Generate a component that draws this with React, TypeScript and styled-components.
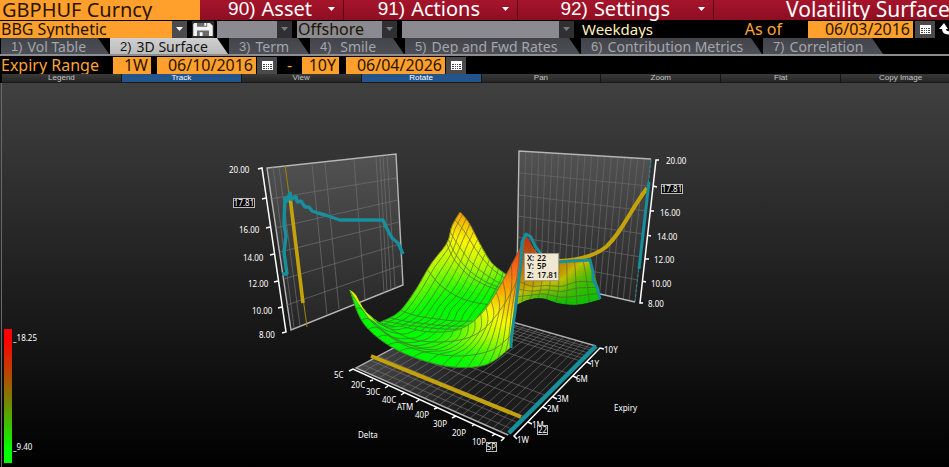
import React from "react";
import styled, { createGlobalStyle } from "styled-components";

const Global = createGlobalStyle`
  * { box-sizing: border-box; }
  body { margin: 0; background: #000; }
  button, input, select { font: inherit; margin: 0; border: 0; border-radius: 0; }
`;

const Page = styled.div`
  min-height: 100vh;
  display: flex;
  flex-direction: column;
  overflow: hidden;
  background: #000;
  font-family: "Noto Sans", "Open Sans", sans-serif;
  font-size: 16px;
  color: #fba535;
`;

const Header = styled.header`
  display: grid;
  grid-template-columns: 200fr 144fr 174fr 196fr 235fr;
  height: 20px;
  font-size: 20px;
  line-height: 18px;
  white-space: nowrap;
`;

const Security = styled.div`
  background: #ffa02c;
  color: #2a1400;
  padding-left: 2px;
  line-height: 19px;
`;

const MenuButton = styled.button`
  display: flex;
  align-items: center;
  justify-content: flex-end;
  gap: 6px;
  min-width: 0;
  padding: 0 8px 2px 0;
  line-height: 18px;
  color: #fff;
  background: linear-gradient(#a5152c, #8f0e22);
  border-right: 1px solid #5c0714;
`;

const MenuText = styled.span<{ $gap: number }>`
  margin-right: ${(p) => p.$gap}px;
`;

const Num = styled.span<{ $size: number }>`
  font-family: "Liberation Sans Narrow", "Liberation Sans", sans-serif;
  font-size: ${(p) => p.$size}px;
`;

const Title = styled.h1`
  margin: 0;
  min-width: 0;
  overflow: hidden;
  padding-left: 72px;
  font-size: 21px;
  line-height: 19px;
  font-weight: 400;
  color: #fff;
  background: linear-gradient(#a5152c, #8f0e22);
`;

const Bar = styled.div`
  display: flex;
  align-items: center;
  height: 18px;
  line-height: 17px;
  white-space: nowrap;
`;

const Picker = styled.label<{ $w: number; $after: number }>`
  display: flex;
  flex: 0 1 ${(p) => p.$w}px;
  height: 17px;
  min-width: 0;
  margin-right: ${(p) => p.$after}px;
`;

const Select = styled.select<{ $bg: string }>`
  appearance: none;
  flex: 1;
  min-width: 0;
  height: 17px;
  line-height: 17px;
  padding: 0 0 0 1px;
  color: #201400;
  background: ${(p) => p.$bg};
`;

const Arrow = styled.span<{ $dim?: boolean }>`
  width: 15px;
  display: grid;
  place-items: center;
  color: ${(p) => (p.$dim ? "#7b7b7e" : "#fff")};
  background: ${(p) => (p.$dim ? "#303033" : "#4b4b4e")};
`;

const Icon = styled.button`
  display: grid;
  place-items: center;
  flex: none;
  width: 20px;
  height: 17px;
  padding: 0;
  color: #fff;
  background: #4a4a4c;
`;

const BareIcon = styled(Icon)`
  width: 22px;
  margin-right: 3px;
  background: #2c2c2c;
`;

const Refresh = styled(Icon)`
  width: 15px;
  margin: 0 -5px 0 4px;
  background: transparent;
`;

const Calendar = styled.span`
  flex: 1;
  font-size: 15px;
  color: #fff0b8;
`;

const AsOf = styled.label`
  display: flex;
  gap: 26px;
  margin-right: 2px;
`;

const Field = styled.input<{ $w: number }>`
  width: ${(p) => p.$w}px;
  height: 17px;
  padding: 0 3px 0 0;
  line-height: 17px;
  text-align: right;
  color: #2a1400;
  background: #ffa02c;
`;

const Tabs = styled.nav`
  display: flex;
  gap: 1px;
  height: 18px;
  padding-left: 1px;
  border-bottom: 2px solid #8d8d90;
`;

const Tab = styled.button<{ $w: number; $on?: boolean }>`
  display: flex;
  align-items: center;
  gap: 5px;
  flex: 0 1 ${(p) => p.$w}px;
  min-width: 0;
  height: 16px;
  padding: 1px 0 0 10px;
  font-size: 14px;
  line-height: 16px;
  white-space: nowrap;
  color: ${(p) => (p.$on ? "#141414" : "#a3a6ac")};
  background: ${(p) => (p.$on ? "linear-gradient(#d0d0d0, #bababa)" : "linear-gradient(#43444a, #4e4f56)")};
  clip-path: polygon(0 0, calc(100% - 11px) 0, 100% 100%, 0 100%);
`;

const Range = styled(Bar)`
  padding-left: 1px;
`;

const RangeLabel = styled.label`
  width: 112px;
`;

const Gap = styled.span<{ $w: number }>`
  width: ${(p) => p.$w}px;
  text-align: center;
`;

const Tools = styled.div`
  display: grid;
  grid-template-columns: repeat(8, 1fr);
  height: 9px;
  padding-left: 2px;
  margin-right: -12px;
`;

const Tool = styled.button<{ $on?: boolean }>`
  min-width: 0;
  padding: 0;
  height: 9px;
  font-family: "Liberation Sans", Arial, sans-serif;
  font-size: 8px;
  line-height: 8px;
  color: ${(p) => (p.$on ? "#fff" : "#c4c4c4")};
  background: ${(p) => (p.$on ? "#24548c" : "linear-gradient(#3a3a3a, #262626)")};
  border-right: 1px solid #161616;
  border-bottom: 1px solid #1a1a1a;
`;

const Chart = styled.main`
  flex: 1;
  background: linear-gradient(#404040, #1d1d1d 55%, #000);
`;

const Plot = styled.svg`
  display: block;
  width: 100%;
  height: auto;
  font-family: "Noto Sans", "Open Sans", sans-serif;
  font-size: 8px;
  fill: #fff;
`;

const tabs: [string, string, number][] = [
  ["1)", "Vol Table", 108],
  ["2)", "3D Surface", 118],
  ["3)", "Term", 80],
  ["4)", "\u00a0Smile", 94],
  ["5)", "Dep and Fwd Rates", 175],
  ["6)", "Contribution Metrics", 181],
  ["7)", "Correlation", 120],
];

const tools = ["Legend", "Track", "View", "Rotate", "Pan", "Zoom", "Flat", "Copy Image"];

const Caret = () => (
  <svg width="7" height="4" viewBox="0 0 7 4" aria-hidden="true">
    <path d="M0 0h7L3.5 4z" fill="currentColor" />
  </svg>
);

const CalendarIcon = () => (
  <svg width="11" height="9" viewBox="0 0 11 9" aria-hidden="true">
    <path d="M0 0h11v9H0z" fill="#fff" />
    <path d="M1 3h2v1H1zM4 3h1v1H4zM6 3h1v1H6zM8 3h2v1H8zM1 5h2v1H1zM4 5h1v1H4zM6 5h1v1H6zM8 5h2v1H8zM1 7h2v1H1zM4 7h1v1H4zM6 7h1v1H6zM8 7h2v1H8z" fill="#444" />
  </svg>
);

/* ---------- surface geometry ---------- */

type P = [number, number, number];

const spline = (a: number, b: number, c: number, d: number, t: number) =>
  0.5 * (2 * b + (c - a) * t + (2 * a - 5 * b + 4 * c - d) * t * t + (3 * b - a - 3 * c + d) * t * t * t);

function along(points: P[], u: number): P {
  const n = points.length - 1;
  const s = Math.min(u * n, n - 1e-6);
  const i = Math.floor(s);
  const t = s - i;
  const at = (k: number) => points[Math.max(0, Math.min(n, k))];
  return [0, 1, 2].map((k) => spline(at(i - 1)[k], at(i)[k], at(i + 1)[k], at(i + 2)[k], t)) as P;
}

const surfaceAt = (rows: P[][], u: number, v: number) => along(rows.map((r) => along(r, u)), v);

function heat(h: number) {
  const t = Math.max(0, Math.min(1, h));
  const r = t < 0.5 ? Math.round(t * 2 * 255) : 255;
  const g = t < 0.5 ? 255 : Math.round(255 - (t - 0.5) * 2 * 215);
  return `rgb(${r},${g},${t > 0.75 ? 20 : 0})`;
}

const toPath = (pts: P[]) => "M" + pts.map((p) => `${p[0].toFixed(1)} ${p[1].toFixed(1)}`).join("L");

interface PatchProps {
  rows: P[][];
  us: number[];
  vs: number[];
  shade?: number;
}

function Patch({ rows, us, vs, shade = 0 }: PatchProps) {
  const nu = 44;
  const nv = 24;
  const cells = [];
  for (let j = 0; j < nv; j++) {
    for (let i = 0; i < nu; i++) {
      const q = [
        surfaceAt(rows, i / nu, j / nv),
        surfaceAt(rows, (i + 1) / nu, j / nv),
        surfaceAt(rows, (i + 1) / nu, (j + 1) / nv),
        surfaceAt(rows, i / nu, (j + 1) / nv),
      ];
      const c = heat((q[0][2] + q[2][2]) / 2);
      cells.push(<path key={`${i}-${j}`} d={toPath(q) + "Z"} fill={c} stroke={c} strokeWidth="0.6" />);
    }
  }
  const steps = Array.from({ length: 41 }, (_, i) => i / 40);
  const outline = toPath([
    ...steps.map((s) => surfaceAt(rows, s, 0)),
    ...steps.map((s) => surfaceAt(rows, 1, s)),
    ...steps.map((s) => surfaceAt(rows, 1 - s, 1)),
    ...steps.map((s) => surfaceAt(rows, 0, 1 - s)),
  ]);
  return (
    <g>
      {cells}
      {shade > 0 && <path d={outline + "Z"} fill="#403000" opacity={shade} />}
      <g fill="none" stroke="#55603a" strokeWidth="0.9" opacity="0.75">
        {us.map((u) => <path key={"u" + u} d={toPath(steps.map((s) => surfaceAt(rows, u, s)))} />)}
        {vs.map((v) => <path key={"v" + v} d={toPath(steps.map((s) => surfaceAt(rows, s, v)))} />)}
      </g>
    </g>
  );
}

const even = (n: number) => Array.from({ length: n + 1 }, (_, i) => i / n);

const basin: P[][] = [
  [[460, 212, 0.72], [469, 223, 0.66], [480, 244, 0.47], [491, 262, 0.36], [504, 273, 0.22], [518, 282, 0.12]],
  [[452, 226, 0.6], [462, 239, 0.52], [474, 256, 0.44], [488, 270, 0.32], [502, 280, 0.15], [516, 288, 0.05]],
  [[447, 243, 0.47], [454, 258, 0.4], [467, 273, 0.26], [482, 283, 0.15], [497, 289, 0.05], [513, 293, 0]],
  [[431, 264, 0.4], [442, 279, 0.2], [457, 291, 0.06], [472, 298, 0.02], [490, 302, 0], [508, 304, 0]],
  [[415, 291, 0.24], [428, 301, 0.05], [443, 307, 0], [461, 311, 0], [482, 313, 0], [503, 313, 0.05]],
  [[399, 312, 0.05], [415, 317, 0], [435, 320, 0], [455, 322, 0], [475, 322, 0.05], [499, 321, 0.2]],
  [[381, 322, 0], [400, 326, 0], [420, 329, 0], [440, 331, 0], [465, 331, 0.1], [494, 328, 0.3]],
  [[378, 324, 0], [394, 336, 0], [415, 343, 0], [438, 347, 0], [462, 345, 0.1], [490, 338, 0.3]],
];

const slope: P[][] = [
  [[400, 326, 0], [430, 332, 0], [460, 329, 0.15], [482, 313, 0.42], [500, 286, 0.74], [526, 237, 1]],
  [[385, 326, 0], [418, 339, 0], [455, 339, 0.15], [482, 328, 0.38], [503, 302, 0.62], [521, 268, 0.88]],
  [[366, 312, 0], [395, 339, 0], [435, 349, 0.04], [470, 346, 0.2], [498, 329, 0.44], [515, 306, 0.62]],
  [[352, 293, 0.05], [373, 323, 0], [409, 347, 0], [455, 356, 0.02], [492, 350, 0.2], [513, 333, 0.44]],
  [[350, 290, 0.1], [364, 324, 0], [397, 350, 0], [445, 366, 0], [485, 365, 0.06], [511, 347, 0.3]],
];

const rim: P[][] = [
  [[526, 236, 1], [536, 252, 0.85], [548, 260, 0.7], [562, 262, 0.68], [576, 260, 0.66], [590, 260, 0.52]],
  [[521, 262, 0.8], [533, 272, 0.74], [547, 274, 0.66], [562, 275, 0.58], [577, 270, 0.42], [593, 271, 0.2]],
  [[517, 285, 0.62], [531, 289, 0.52], [546, 288, 0.4], [562, 289, 0.28], [578, 285, 0.15], [597, 285, 0.05]],
  [[515, 305, 0.4], [529, 299, 0.2], [543, 298, 0.1], [560, 303, 0], [579, 304, 0], [600, 299, 0]],
];

const floor = { a: [356, 368], b: [508, 435], c: [596, 346], d: [467, 309] };
const mix = (p: number[], q: number[], t: number) => [p[0] + (q[0] - p[0]) * t, p[1] + (q[1] - p[1]) * t];
const seg = (p: number[], q: number[]) => `M${p[0]} ${p[1]}L${q[0]} ${q[1]}`;

const floorGrid = [
  ...[0.06, 0.13, 0.2, 0.34, 0.44, 0.69, 0.83, 0.86, 0.89, 0.92, 0.95, 0.97].map((t) =>
    seg(mix(floor.a, floor.d, t), mix(floor.b, floor.c, t))),
  ...even(20).map((t) => seg(mix(floor.a, floor.b, t), mix(floor.d, floor.c, t))),
].join("");

const leftGrid = [
  ...[[273, 167, 294, 328], [279, 167, 300, 326], [312, 164, 327, 315], [325, 163, 339, 309], [354, 160, 365, 299],
    [376, 157, 384, 293], [380, 156, 387, 291], [383, 156, 391, 290], [387, 155, 395, 288],
    [270, 199, 396, 178], [275, 228, 398, 200], [280, 252, 399, 222], [284, 279, 400, 244], [287, 305, 402, 265]],
].map(([a, b, c, d]) => seg([a, b], [c, d])).join("");

const rightGrid = [
  ...even(20).map((t) => seg(mix([519, 151], [651, 159], t), mix([517, 275], [635, 302], t))),
  ...[[519, 173, 649, 186], [518, 195, 647, 211], [518, 216, 644, 234], [517, 237, 641, 257], [517, 257, 638, 280]]
    .map(([a, b, c, d]) => seg([a, b], [c, d])),
].join("");

const labels: [string, number, number][] = [
  ["20.00", 229, 173], ["16.00", 239, 233], ["14.00", 243, 261], ["12.00", 248, 287], ["10.00", 252, 314], ["8.00", 259, 338],
  ["20.00", 666, 164], ["16.00", 660, 216], ["14.00", 657, 240], ["12.00", 654, 263], ["10.00", 651, 287], ["8.00", 648, 307],
  ["5C", 334, 378], ["20C", 351, 388], ["30C", 366, 395], ["40C", 382, 403], ["ATM", 397, 410], ["40P", 415, 418],
  ["30P", 433, 427], ["20P", 452, 436], ["10P", 472, 445], ["1W", 517, 443], ["1M", 532, 428], ["2M", 547, 412],
  ["3M", 557, 402], ["6M", 576, 382], ["1Y", 590, 367], ["10Y", 604, 353],
];

const boxed: [string, number, number, number][] = [
  ["17.81", 233, 198, 22], ["17.81", 661, 184, 22], ["5P", 486, 442, 11], ["22", 537, 425, 11],
];

function VolSurface() {
  return (
    <Plot viewBox="0 83 949 384" role="img" aria-label="Implied volatility by delta and expiry">
      <defs>
        <linearGradient id="scale" x1="0" y1="0" x2="0" y2="1">
          <stop offset="0.08" stopColor="#f00" />
          <stop offset="0.5" stopColor="#867600" />
          <stop offset="0.9" stopColor="#0f0" />
        </linearGradient>
        <linearGradient id="wall" x1="0" y1="0" x2="0" y2="1">
          <stop offset="0" stopColor="#535353" />
          <stop offset="1" stopColor="#242424" />
        </linearGradient>
        <linearGradient id="base" x1="0" y1="0" x2="1" y2="0.2">
          <stop offset="0" stopColor="#505050" />
          <stop offset="0.6" stopColor="#1c1c1c" />
        </linearGradient>
      </defs>

      <path d="M1.5 83V467" stroke="#696969" />
      <rect x="4" y="329" width="8" height="134" fill="url(#scale)" />
      <text x="13" y="341">_18.25</text>
      <text x="13" y="450">_9.40</text>

      <path d="M267 168L396 154L403 285L291 330Z" fill="url(#wall)" stroke="#b5b5b5" strokeWidth="1.4" />
      <path d={leftGrid} stroke="#707070" strokeWidth="0.7" fill="none" />
      <path d="M519 151L651 159L635 302L517 275Z" fill="url(#wall)" />
      <path d={rightGrid} stroke="#686868" strokeWidth="0.7" fill="none" />
      <path d="M651 159L519 151L517 275L635 302" stroke="#b5b5b5" strokeWidth="1.4" fill="none" />

      <path d="M356 368L508 435L596 346L467 309Z" fill="url(#base)" />
      <path d={floorGrid} stroke="#777" strokeWidth="0.6" fill="none" />
      <path d="M508 435L356 368L467 309L596 346" stroke="#aaa" strokeWidth="1.4" fill="none" />

      <g fill="none" stroke="#fff" strokeWidth="1.5">
        <path d="M258 169L262 168L286 332L282 333M262 199L266 198M266 228L270 227M270 255L274 254M274 282L278 281M278 308L282 307" />
        <path d="M659 160L656 160L640 303L643 303M653 186L657 187M650 211L654 211M647 235L651 236M645 259L649 259M642 281L646 282" />
        <path d="M349 371L353 369L504 438L501 441M373 380L370 381M388 386L385 388M404 393L401 395M419 400L416 402M437 408L434 409M456 416L452 418M475 424L472 426M495 434L492 436" />
        <path d="M517 439L514 436L600 348L604 349M528 422L532 424M543 407L547 409M553 397L557 399M573 376L577 378M587 362L591 364" />
      </g>

      <path d="M285 165L307 327" stroke="#a18505" fill="none" />
      <path d="M290 197L303 303" stroke="#c4a20a" strokeWidth="3.6" fill="none" />
      <path d="M282 274H287L284 252L286 236L284 224L285 197L287 202L290 192L291 200L296 196L297 202L301 201L305 207L309 207L312 211L318 213L325 215L340 220H383L386 227L392 238L398 243L403 254" stroke="#178f9d" strokeWidth="3.4" fill="none" strokeLinejoin="bevel" />
      <path d="M558 261Q589 260 606 247C622 232 628 214 647 188" stroke="#c4a20a" strokeWidth="4" fill="none" />
      <path d="M651 160L635 301" stroke="#178f9d" strokeDasharray="3 2" fill="none" />
      <path d="M649 182L639 269" stroke="#178f9d" strokeWidth="3" fill="none" />
      <path d="M371 356L521 417" stroke="#c4a20a" strokeWidth="4" />
      <path d="M509 433L596 346" stroke="#178f9d" strokeWidth="4.5" />

      <Patch rows={rim} us={even(9)} vs={[0.6, 0.72, 0.84]} shade={0.3} />
      <Patch rows={basin} us={even(14)} vs={[0, 0.09, 0.2, 0.26, 0.29, 0.46, 0.7, 0.78, 0.83, 0.88]} />
      <Patch rows={slope} us={even(17)} vs={[0, 0.3, 0.75, 1]} />
      <path d="M350 290L353 292L356 295L364 310L377 323L369 318L358 303Z" fill="#dff000" />

      <path d="M511 348V339L515 312L521 262L522 242L526 234L531 237L535 246L541 254L547 263L558 262L571 261L590 260L593 272V280L597 287L600 299" stroke="#178f9d" strokeWidth="3" fill="none" strokeLinejoin="round" />

      <rect x="524.5" y="253.5" width="34" height="27" fill="#f0e8d2" stroke="#a9a28f" />
      <g fill="#15120c" fontSize="8" fontWeight="600">
        <text x="527" y="261">X:</text><text x="537" y="261">22</text>
        <text x="527" y="269">Y:</text><text x="537" y="269">5P</text>
        <text x="527" y="278">Z:</text><text x="537" y="278">17.81</text>
      </g>

      {labels.map(([t, x, y], i) => <text key={i} x={x} y={y}>{t}</text>)}
      {boxed.map(([t, x, y, w], i) => (
        <g key={i}>
          <rect x={x + 0.5} y={y + 0.5} width={w - 1} height="9" fill="#050505" stroke="#bbb" />
          <text x={x + w / 2} y={y + 8} textAnchor="middle">{t}</text>
        </g>
      ))}
      <text x="358" y="438">Delta</text>
      <text x="614" y="411">Expiry</text>
    </Plot>
  );
}

const Dropdown = ({ label, value, w, after, bg = "#8a8a90", dim = true }: {
  label: string; value: string; w: number; after: number; bg?: string; dim?: boolean;
}) => (
  <Picker $w={w} $after={after}>
    <Select $bg={bg} aria-label={label}><option>{value}</option></Select>
    <Arrow $dim={dim}><Caret /></Arrow>
  </Picker>
);

const Menu = ({ num, text, gap }: { num: string; text: string; gap: number }) => (
  <MenuButton>
    <Num $size={19}>{num}</Num>
    <MenuText $gap={gap}>{text}</MenuText>
    <Caret />
  </MenuButton>
);

export default function App() {
  return (
    <Page>
      <Global />
      <Header>
        <Security>GBPHUF Curncy</Security>
        <Menu num="90)" text="Asset" gap={10} />
        <Menu num="91)" text="Actions" gap={16} />
        <Menu num="92)" text="Settings" gap={22} />
        <Title>Volatility Surface</Title>
      </Header>
      <Bar>
        <Dropdown label="Source" value="BBG Synthetic" w={187} after={5} bg="#ffa02c" dim={false} />
        <BareIcon aria-label="Save">
          <svg width="20" height="13" viewBox="0 0 21 14" aria-hidden="true">
            <path d="M1 0H18L21 3V14H0V1Z" fill="#f2f2f2" />
            <path d="M4 0H15V4H4ZM4 8H17V14H4Z" fill="#6b6b6b" />
            <path d="M12 0h2v3h-2zM7 10h3v4H7z" fill="#fff" />
          </svg>
        </BareIcon>
        <Dropdown label="Side" value="" w={75} after={5} />
        <Dropdown label="Market" value="Offshore" w={100} after={5} />
        <Dropdown label="Model" value="" w={172} after={8} />
        <Calendar>Weekdays</Calendar>
        <AsOf>As of<Field $w={105} defaultValue="06/03/2016" /></AsOf>
        <Icon aria-label="Pick date"><CalendarIcon /></Icon>
        <Refresh aria-label="Refresh">
          <svg width="15" height="12" viewBox="0 0 15 12" aria-hidden="true">
            <path d="M0 6L5 0L9 6H7Q7 9 13 8V11Q3 13 3 6Z" fill="#fff" />
          </svg>
        </Refresh>
      </Bar>
      <Tabs>
        {tabs.map(([n, t, w], i) => (
          <Tab key={n} $w={w} $on={i === 1}><Num $size={13}>{n}</Num>{t}</Tab>
        ))}
      </Tabs>
      <Range>
        <RangeLabel htmlFor="from">Expiry Range</RangeLabel>
        <Field id="from" $w={38} defaultValue="1W" />
        <Gap $w={6} />
        <Field $w={99} defaultValue="06/10/2016" aria-label="Start date" />
        <Gap $w={1} />
        <Icon aria-label="Pick start date"><CalendarIcon /></Icon>
        <Gap $w={25}>-</Gap>
        <Field $w={37} defaultValue="10Y" aria-label="End tenor" />
        <Gap $w={7} />
        <Field $w={99} defaultValue="06/04/2026" aria-label="End date" />
        <Gap $w={1} />
        <Icon aria-label="Pick end date"><CalendarIcon /></Icon>
      </Range>
      <Tools>
        {tools.map((t, i) => <Tool key={t} $on={i === 1 || i === 3}>{t}</Tool>)}
      </Tools>
      <Chart>
        <VolSurface />
      </Chart>
    </Page>
  );
}
